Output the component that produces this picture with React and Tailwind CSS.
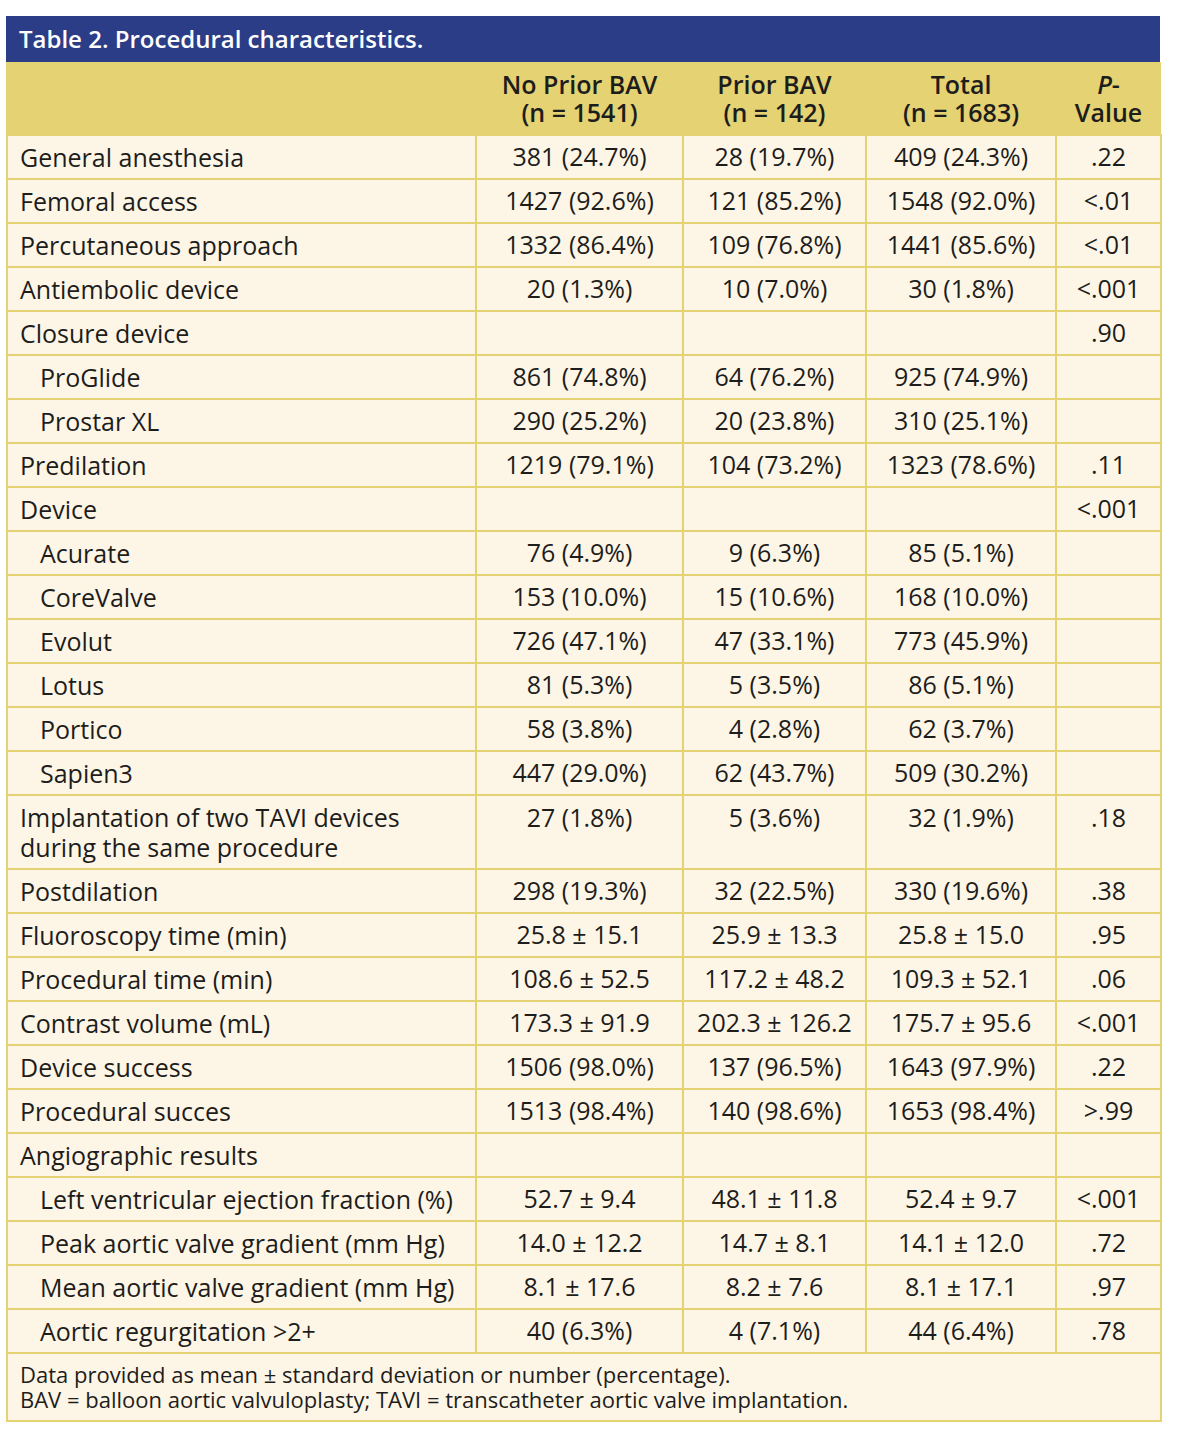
import React from 'react';

const rows = [
  { label: 'General anesthesia', v: ['381 (24.7%)', '28 (19.7%)', '409 (24.3%)', '.22'] },
  { label: 'Femoral access', v: ['1427 (92.6%)', '121 (85.2%)', '1548 (92.0%)', '<.01'] },
  { label: 'Percutaneous approach', v: ['1332 (86.4%)', '109 (76.8%)', '1441 (85.6%)', '<.01'] },
  { label: 'Antiembolic device', v: ['20 (1.3%)', '10 (7.0%)', '30 (1.8%)', '<.001'] },
  { label: 'Closure device', v: ['', '', '', '.90'] },
  { label: 'ProGlide', sub: true, v: ['861 (74.8%)', '64 (76.2%)', '925 (74.9%)', ''] },
  { label: 'Prostar XL', sub: true, v: ['290 (25.2%)', '20 (23.8%)', '310 (25.1%)', ''] },
  { label: 'Predilation', v: ['1219 (79.1%)', '104 (73.2%)', '1323 (78.6%)', '.11'] },
  { label: 'Device', v: ['', '', '', '<.001'] },
  { label: 'Acurate', sub: true, v: ['76 (4.9%)', '9 (6.3%)', '85 (5.1%)', ''] },
  { label: 'CoreValve', sub: true, v: ['153 (10.0%)', '15 (10.6%)', '168 (10.0%)', ''] },
  { label: 'Evolut', sub: true, v: ['726 (47.1%)', '47 (33.1%)', '773 (45.9%)', ''] },
  { label: 'Lotus', sub: true, v: ['81 (5.3%)', '5 (3.5%)', '86 (5.1%)', ''] },
  { label: 'Portico', sub: true, v: ['58 (3.8%)', '4 (2.8%)', '62 (3.7%)', ''] },
  { label: 'Sapien3', sub: true, v: ['447 (29.0%)', '62 (43.7%)', '509 (30.2%)', ''] },
  { label: 'Implantation of two TAVI devices', label2: 'during the same procedure', tall: true, v: ['27 (1.8%)', '5 (3.6%)', '32 (1.9%)', '.18'] },
  { label: 'Postdilation', v: ['298 (19.3%)', '32 (22.5%)', '330 (19.6%)', '.38'] },
  { label: 'Fluoroscopy time (min)', v: ['25.8 ± 15.1', '25.9 ± 13.3', '25.8 ± 15.0', '.95'] },
  { label: 'Procedural time (min)', v: ['108.6 ± 52.5', '117.2 ± 48.2', '109.3 ± 52.1', '.06'] },
  { label: 'Contrast volume (mL)', v: ['173.3 ± 91.9', '202.3 ± 126.2', '175.7 ± 95.6', '<.001'] },
  { label: 'Device success', v: ['1506 (98.0%)', '137 (96.5%)', '1643 (97.9%)', '.22'] },
  { label: 'Procedural succes', v: ['1513 (98.4%)', '140 (98.6%)', '1653 (98.4%)', '>.99'] },
  { label: 'Angiographic results', v: ['', '', '', ''] },
  { label: 'Left ventricular ejection fraction (%)', sub: true, v: ['52.7 ± 9.4', '48.1 ± 11.8', '52.4 ± 9.7', '<.001'] },
  { label: 'Peak aortic valve gradient (mm Hg)', sub: true, v: ['14.0 ± 12.2', '14.7 ± 8.1', '14.1 ± 12.0', '.72'] },
  { label: 'Mean aortic valve gradient (mm Hg)', sub: true, v: ['8.1 ± 17.6', '8.2 ± 7.6', '8.1 ± 17.1', '.97'] },
  { label: 'Aortic regurgitation >2+', sub: true, v: ['40 (6.3%)', '4 (7.1%)', '44 (6.4%)', '.78'] },
];

function HeadCell({ top, bottom }) {
  return (
    <th className="font-semibold text-center">
      <div className="leading-[28px]">{top}</div>
      <div className="leading-[28px]">{bottom}</div>
    </th>
  );
}

export default function App() {
  return (
    <div className="bg-white min-h-[1444px] pt-4 pl-[6px]" style={{ fontFamily: '"Open Sans", Lato, sans-serif' }}>
      <div className="w-[1154px]">
        <div className="h-[46px] bg-[#2b3d87] text-white text-[24px] font-semibold flex items-center pl-[13px]">
          Table 2. Procedural characteristics.
        </div>
        <table className="w-full border-collapse table-fixed text-[#1d1d1b] text-[25px]">
          <colgroup>
            <col className="w-[469px]" />
            <col className="w-[207px]" />
            <col className="w-[183px]" />
            <col className="w-[190px]" />
            <col className="w-[105px]" />
          </colgroup>
          <thead>
            <tr className="bg-[#e4d273] h-[73px]">
              <th className="border-l-2 border-[#e4d273]"></th>
              <HeadCell top="No Prior BAV" bottom="(n = 1541)" />
              <HeadCell top="Prior BAV" bottom="(n = 142)" />
              <HeadCell top="Total" bottom="(n = 1683)" />
              <HeadCell top={<><i>P</i>-</>} bottom="Value" />
            </tr>
          </thead>
          <tbody>
            {rows.map((r, i) => (
              <tr key={i} className={`bg-[#fdf6e7] ${r.tall ? 'h-[74px]' : 'h-[44px]'}`}>
                <td className={`border-2 border-[#e4d273] leading-[30px] whitespace-nowrap ${r.sub ? 'pl-[32px]' : 'pl-[12px]'} ${r.tall ? 'align-top pt-[6px]' : ''}`}>
                  {r.label}
                  {r.label2 && <><br />{r.label2}</>}
                </td>
                {r.v.map((v, j) => (
                  <td key={j} className={`border-2 border-[#e4d273] text-center whitespace-nowrap ${r.tall ? 'align-top pt-[6px] leading-[30px]' : ''}`}>
                    {v}
                  </td>
                ))}
              </tr>
            ))}
            <tr className="bg-[#fdf6e7]">
              <td colSpan={5} className="border-2 border-[#e4d273] pl-[12px] pt-[8px] pb-[8px] text-[22px] leading-[25px]">
                Data provided as mean ± standard deviation or number (percentage).<br />
                BAV = balloon aortic valvuloplasty; TAVI = transcatheter aortic valve implantation.
              </td>
            </tr>
          </tbody>
        </table>
      </div>
    </div>
  );
}
